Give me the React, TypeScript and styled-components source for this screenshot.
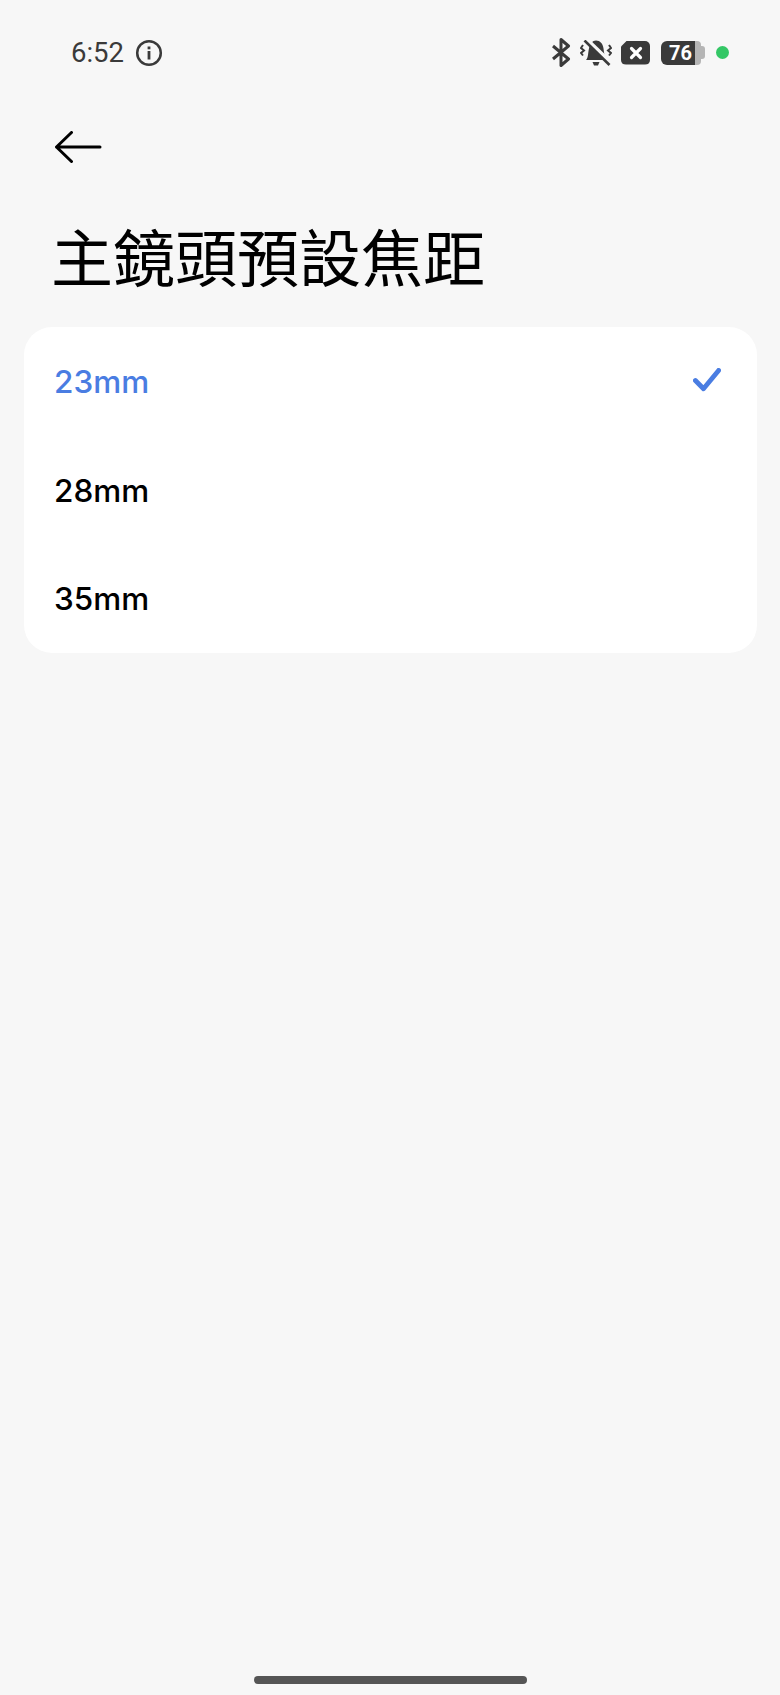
import { FC } from "react";
import styled, { createGlobalStyle } from "styled-components";

const GlobalStyle = createGlobalStyle`
  html, body {
    margin: 0;
    padding: 0;
    background: #f7f7f7;
  }
`;

interface IOption {
  label: string;
  selected?: boolean;
}

const options: IOption[] = [
  { label: "23mm", selected: true },
  { label: "28mm" },
  { label: "35mm" },
];

const Option: FC<IOption> = ({ label, selected }): JSX.Element => (
  <OptionRow>
    <OptionLabel $selected={selected}>{label}</OptionLabel>
    {selected && (
      <CheckMark width="28" height="24" viewBox="0 0 28 24" fill="none">
        <path
          d="M2.4 12.5 L10.5 20.8 L25.6 2.4"
          stroke="#4a7de2"
          strokeWidth="4.8"
          strokeLinecap="round"
          strokeLinejoin="round"
        />
      </CheckMark>
    )}
  </OptionRow>
);

const App: FC = (): JSX.Element => {
  return (
    <Screen>
      <GlobalStyle />
      <StatusBar>
        <StatusLeft>
          <Clock>6:52</Clock>
          <svg width="28" height="28" viewBox="0 0 28 28" fill="none">
            <circle cx="14" cy="14" r="11.8" stroke="#3a3a3a" strokeWidth="2.5" />
            <rect x="12.6" y="12" width="2.8" height="8.5" fill="#3a3a3a" />
            <rect x="12.6" y="7.5" width="2.8" height="2.8" fill="#3a3a3a" />
          </svg>
        </StatusLeft>
        <StatusRight>
          <svg width="20" height="29" viewBox="0 0 20 29" fill="none">
            <path
              d="M2 8 L17.5 21 L10 27.5 V1.5 L17.5 8 L2 21"
              stroke="#3a3a3a"
              strokeWidth="3"
              strokeLinejoin="round"
            />
          </svg>
          <svg width="32" height="26" viewBox="0 0 32 26" fill="none">
            <path
              d="M6 20 C8.5 17.5 8 12 9 8.5 C10 3.5 12.5 0.5 16 0.5 C20 0.5 23 3.5 23.5 8.5 C24 13 24.5 17.5 27 20 Z"
              fill="#3a3a3a"
            />
            <path d="M12.5 22 H19.5 L18 25.5 H14 Z" fill="#3a3a3a" />
            <path d="M5.5 -1 L31 23.5" stroke="#f7f7f7" strokeWidth="5" />
            <path d="M4.5 0.5 L29.5 25" stroke="#3a3a3a" strokeWidth="2.6" />
            <path
              d="M3 5 L1 8 L4 10.5 L1 13 L3 15.5 M29 5 L31 8 L28 10.5 L31 13 L29 15.5"
              stroke="#3a3a3a"
              strokeWidth="2"
            />
          </svg>
          <SimBadge>
            <svg width="14" height="14" viewBox="0 0 14 14" fill="none">
              <path
                d="M2.5 2.5 L11.5 11.5 M11.5 2.5 L2.5 11.5"
                stroke="#ffffff"
                strokeWidth="3.2"
                strokeLinecap="round"
              />
            </svg>
          </SimBadge>
          <Battery>
            <BatteryFill>76</BatteryFill>
            <BatteryRest />
            <BatteryCap />
          </Battery>
          <GreenDot />
        </StatusRight>
      </StatusBar>

      <BackButton>
        <svg width="48" height="32" viewBox="0 0 48 32" fill="none">
          <path
            d="M46 16 H2.5 M17.5 1.5 L2.5 16 L17.5 30.5"
            stroke="#000000"
            strokeWidth="3"
            strokeLinecap="round"
            strokeLinejoin="round"
          />
        </svg>
      </BackButton>

      <Title>主鏡頭預設焦距</Title>

      <Card>
        {options.map((item) => (
          <Option key={item.label} label={item.label} selected={item.selected} />
        ))}
      </Card>

      <Spacer />
      <HomeBar />
    </Screen>
  );
};

export default App;

const Screen = styled.div`
  width: 780px;
  height: 1695px;
  background: #f7f7f7;
  display: flex;
  flex-direction: column;
  overflow: hidden;
  font-family: Inter, Roboto, "Liberation Sans", sans-serif;
`;

const StatusBar = styled.div`
  height: 29px;
  margin-top: 38px;
  padding: 0 51px 0 71px;
  display: flex;
  justify-content: space-between;
  align-items: center;
`;

const StatusLeft = styled.div`
  display: flex;
  align-items: center;
  gap: 11px;
`;

const Clock = styled.span`
  font-family: Roboto, sans-serif;
  font-size: 27.5px;
  color: #3a3a3a;
`;

const StatusRight = styled.div`
  display: flex;
  align-items: center;
  gap: 9px;
`;

const SimBadge = styled.div`
  width: 29px;
  height: 24px;
  background: #3a3a3a;
  border-radius: 5px;
  clip-path: polygon(6px 0, 100% 0, 100% 100%, 0 100%, 0 6px);
  display: flex;
  align-items: center;
  justify-content: center;
`;

const Battery = styled.div`
  display: flex;
  align-items: center;
  margin-left: 2px;
`;

const BatteryFill = styled.div`
  width: 34px;
  height: 24px;
  box-sizing: border-box;
  padding-right: 3px;
  background: #3a3a3a;
  border-radius: 6px 0 0 6px;
  color: #ffffff;
  font-family: Roboto, sans-serif;
  font-size: 20px;
  font-weight: 700;
  line-height: 24px;
  text-align: right;
`;

const BatteryRest = styled.div`
  width: 6px;
  height: 24px;
  background: #b5b5b5;
  border-radius: 0 4px 4px 0;
`;

const BatteryCap = styled.div`
  width: 4px;
  height: 13px;
  background: #b5b5b5;
  border-radius: 0 3px 3px 0;
`;

const GreenDot = styled.div`
  width: 13px;
  height: 13px;
  margin-left: 2px;
  border-radius: 50%;
  background: #34c766;
`;

const BackButton = styled.div`
  height: 32px;
  margin-top: 64px;
  padding-left: 54px;
`;

const Title = styled.h1`
  margin: 48px 0 0;
  padding-left: 51px;
  font-family: "Noto Sans CJK TC", sans-serif;
  font-size: 62px;
  line-height: 88px;
  font-weight: 400;
  color: #000000;
`;

const Card = styled.div`
  margin: 28px 23px 0 24px;
  background: #ffffff;
  border-radius: 28px;
  display: flex;
  flex-direction: column;
`;

const OptionRow = styled.div`
  height: 108px;
  padding: 0 36px 0 30px;
  display: flex;
  justify-content: space-between;
  align-items: center;

  &:first-child {
    height: 110px;
  }
`;

const OptionLabel = styled.span<{ $selected?: boolean }>`
  margin-bottom: 2px;
  font-size: 31.5px;
  font-weight: 500;
  color: ${(p) => (p.$selected ? "#4a7de2" : "#000000")};
`;

const CheckMark = styled.svg`
  margin-bottom: 4px;
`;

const Spacer = styled.div`
  flex: 1;
`;

const HomeBar = styled.div`
  width: 273px;
  height: 8px;
  margin: 0 auto 11px;
  border-radius: 4px;
  background: #555555;
`;
